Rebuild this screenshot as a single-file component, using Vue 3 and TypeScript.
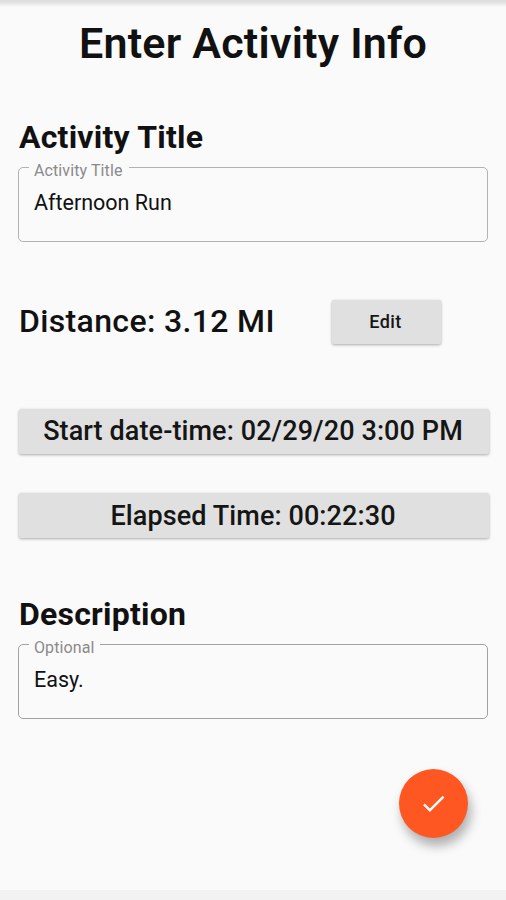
<script setup lang="ts">
import { ref } from 'vue'

const title = ref('Afternoon Run')
const description = ref('Easy.')
</script>

<template>
  <main class="screen">
    <h1 class="heading">Enter Activity Info</h1>
    <h2 class="section title-section">Activity Title</h2>
    <fieldset class="field light">
      <legend>Activity Title</legend>
      <div class="value">{{ title }}</div>
    </fieldset>
    <div class="distance">
      <h2 class="section amount">Distance: 3.12 MI</h2>
      <button class="btn edit">Edit</button>
    </div>
    <button class="btn wide start">Start date-time: 02/29/20 3:00 PM</button>
    <button class="btn wide elapsed">Elapsed Time: 00:22:30</button>
    <h2 class="section desc-section">Description</h2>
    <fieldset class="field">
      <legend>Optional</legend>
      <div class="value">{{ description }}</div>
    </fieldset>
    <button class="fab" aria-label="Save">
      <svg viewBox="0 0 24 24" width="29" height="29"><path d="M9 16.17 4.83 12l-1.42 1.41L9 19 21 7l-1.41-1.41z" fill="#fff" /></svg>
    </button>
    <footer class="bottom"></footer>
  </main>
</template>

<style>
body { margin: 0; background: #fafafa; }
</style>

<style scoped>
.screen {
  box-sizing: border-box;
  height: 900px;
  overflow: hidden;
  display: flex;
  flex-direction: column;
  background: linear-gradient(#dcdcdc, #e4e4e4 3px, #fafafa 7px);
  font-family: Roboto, sans-serif;
  color: #111;
}
.heading {
  margin: 17px 0 0;
  text-align: center;
  font-size: 43px;
  line-height: 52px;
  font-weight: 600;
  letter-spacing: 0.22px;
  white-space: nowrap;
}
.section {
  margin: 0;
  font-size: 32px;
  line-height: 40px;
  font-weight: 700;
  letter-spacing: 0.22px;
  white-space: nowrap;
}
.section.title-section { margin: 48px 0 0 19px; }
.section.amount { font-weight: 500; letter-spacing: 0.35px; margin-top: -3px; }
.field {
  box-sizing: border-box;
  width: 470px;
  height: 87px;
  margin: -2px 0 0 18px;
  padding: 0 0 0 15px;
  border: 1px solid #a2a2a2;
  border-radius: 5px;
  min-width: 0;
  flex: none;
}
.field.light { border-color: #b2b2b2; }
.field legend {
  margin-left: -5px;
  padding: 7px 6px 0 5px;
  font-size: 16px;
  line-height: 18px;
  letter-spacing: 0.1px;
  color: #8a8a8a;
}
.value { font-size: 21.5px; line-height: 26px; margin-top: 10px; }
.distance {
  display: flex;
  align-items: center;
  justify-content: space-between;
  margin: 58px 65px 0 19px;
  height: 44px;
}
.btn {
  border: 0;
  padding: 0;
  border-radius: 2px;
  background: #e0e0e0;
  color: #151515;
  font-family: inherit;
  font-weight: 500;
  box-shadow: 0 1px 3px rgba(0, 0, 0, 0.32);
  white-space: nowrap;
}
.edit { width: 109px; height: 44px; font-size: 18px; letter-spacing: 0.5px; padding: 0 2px 2px 0; }
.wide { width: 470px; height: 45px; margin-left: 19px; padding-bottom: 2px; font-size: 27px; letter-spacing: 0.1px; flex: none; }
.start { margin-top: 65px; padding-right: 2px; }
.elapsed { margin-top: 39px; padding-right: 2px; padding-bottom: 0; }
.section.desc-section { margin: 56px 0 0 19px; }
.fab {
  display: grid;
  place-items: center;
  width: 69px;
  height: 69px;
  padding: 0;
  border: 0;
  border-radius: 50%;
  background: #ff5722;
  margin: 50px 38px 0 auto;
  flex: none;
  box-shadow: 3px 8px 11px rgba(0, 0, 0, 0.3);
}
.bottom { margin-top: auto; height: 10px; background: #f2f2f2; }
</style>
